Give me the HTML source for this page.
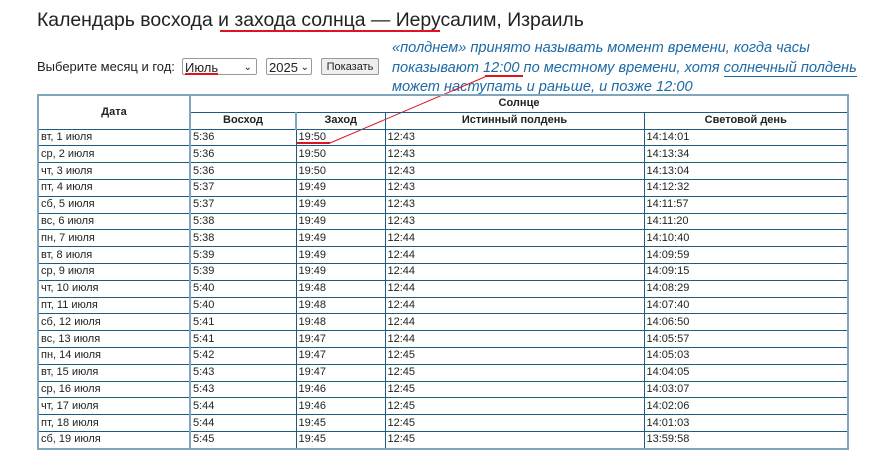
<!DOCTYPE html><html><head><meta charset="utf-8"><style>
body{margin:0;width:888px;height:440px;overflow:hidden;background:#fff;font-family:"Liberation Sans",Arial,sans-serif;color:#222;position:relative}
.abs{position:absolute}
h1{position:absolute;left:37px;top:9px;margin:0;font-weight:normal;font-size:19.4px;color:#222}
.sel{position:absolute;top:58px;height:17px;border:1px solid #999;border-radius:2px;font-size:13px;line-height:17px;padding-left:2px;box-sizing:border-box;background:#fff}
.note{position:absolute;left:392px;top:39px;font-style:italic;color:#1d6aa5;font-size:14.6px;line-height:19.5px;white-space:nowrap}
table{position:absolute;left:37px;top:94px;border-collapse:collapse;font-size:11px;table-layout:fixed}
td,th{border:1px solid #1d5b7f;padding:0 2px;height:15.8px;line-height:15px;white-space:nowrap;overflow:hidden}
th{font-weight:bold;text-align:center}
td:first-child,th:first-child{border-right:2px solid #7fa6bd}
table{border:2px solid #7fa6bd}
.r{background:#e0141c;position:absolute;height:2px}
</style></head><body>
<h1>Календарь восхода и захода солнца — Иерусалим, Израиль</h1>
<div class="r" style="left:220px;top:30px;width:220px"></div>
<div class="abs" style="left:37px;top:59px;font-size:13px">Выберите месяц и год:</div>
<div class="sel" style="left:182px;width:75px">Июль<span style="position:absolute;right:4px;font-size:10px">⌄</span></div>
<div class="sel" style="left:266px;width:46px">2025<span style="position:absolute;right:2px;font-size:10px">⌄</span></div>
<div class="sel" style="left:321px;width:58px;background:#eee;font-size:11px;text-align:center;padding:0">Показать</div>
<div class="r" style="left:185px;top:73px;width:33px"></div>
<div class="note">«полднем» принято называть момент времени, когда часы<br>показывают <span>12:00</span> по местному времени, хотя <span style="border-bottom:1px solid #1d6aa5">солнечный полдень</span><br>может наступать и раньше, и позже 12:00</div>
<div class="r" style="left:485px;top:75px;width:38px"></div>
<div class="r" style="left:297px;top:142px;width:33px"></div>
<svg class="abs" style="left:0;top:0" width="888" height="440"><line x1="330" y1="143" x2="487" y2="76" stroke="#e0141c" stroke-width="1"/></svg>
<table>
<colgroup><col style="width:152px"><col style="width:106px"><col style="width:89px"><col style="width:259px"><col style="width:204px"></colgroup>
<tr><th rowspan="2">Дата</th><th colspan="4">Солнце</th></tr>
<tr><th>Восход</th><th>Заход</th><th>Истинный полдень</th><th>Световой день</th></tr>
<tr><td>вт, 1 июля</td><td>5:36</td><td>19:50</td><td>12:43</td><td>14:14:01</td></tr>
<tr><td>ср, 2 июля</td><td>5:36</td><td>19:50</td><td>12:43</td><td>14:13:34</td></tr>
<tr><td>чт, 3 июля</td><td>5:36</td><td>19:50</td><td>12:43</td><td>14:13:04</td></tr>
<tr><td>пт, 4 июля</td><td>5:37</td><td>19:49</td><td>12:43</td><td>14:12:32</td></tr>
<tr><td>сб, 5 июля</td><td>5:37</td><td>19:49</td><td>12:43</td><td>14:11:57</td></tr>
<tr><td>вс, 6 июля</td><td>5:38</td><td>19:49</td><td>12:43</td><td>14:11:20</td></tr>
<tr><td>пн, 7 июля</td><td>5:38</td><td>19:49</td><td>12:44</td><td>14:10:40</td></tr>
<tr><td>вт, 8 июля</td><td>5:39</td><td>19:49</td><td>12:44</td><td>14:09:59</td></tr>
<tr><td>ср, 9 июля</td><td>5:39</td><td>19:49</td><td>12:44</td><td>14:09:15</td></tr>
<tr><td>чт, 10 июля</td><td>5:40</td><td>19:48</td><td>12:44</td><td>14:08:29</td></tr>
<tr><td>пт, 11 июля</td><td>5:40</td><td>19:48</td><td>12:44</td><td>14:07:40</td></tr>
<tr><td>сб, 12 июля</td><td>5:41</td><td>19:48</td><td>12:44</td><td>14:06:50</td></tr>
<tr><td>вс, 13 июля</td><td>5:41</td><td>19:47</td><td>12:44</td><td>14:05:57</td></tr>
<tr><td>пн, 14 июля</td><td>5:42</td><td>19:47</td><td>12:45</td><td>14:05:03</td></tr>
<tr><td>вт, 15 июля</td><td>5:43</td><td>19:47</td><td>12:45</td><td>14:04:05</td></tr>
<tr><td>ср, 16 июля</td><td>5:43</td><td>19:46</td><td>12:45</td><td>14:03:07</td></tr>
<tr><td>чт, 17 июля</td><td>5:44</td><td>19:46</td><td>12:45</td><td>14:02:06</td></tr>
<tr><td>пт, 18 июля</td><td>5:44</td><td>19:45</td><td>12:45</td><td>14:01:03</td></tr>
<tr><td>сб, 19 июля</td><td>5:45</td><td>19:45</td><td>12:45</td><td>13:59:58</td></tr>
</table>
</body></html>
